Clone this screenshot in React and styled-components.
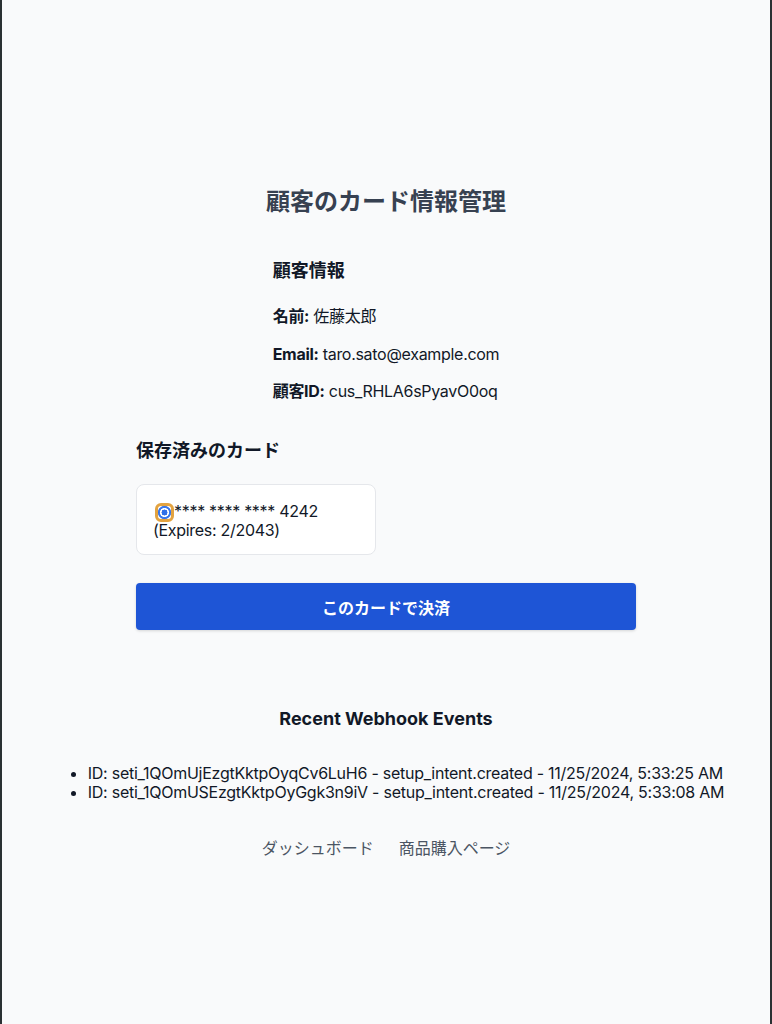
import React from "react";
import styled, { createGlobalStyle } from "styled-components";

const GlobalStyle = createGlobalStyle`
  html, body {
    margin: 0;
    padding: 0;
    background: #f9fafb;
  }
  body {
    font-family: Inter, "Noto Sans CJK JP", sans-serif;
    color: #111827;
  }
`;

const Frame = styled.div`
  min-height: 100vh;
  box-sizing: border-box;
  border-left: 2px solid #2a3133;
  border-right: 2px solid #2a3133;
  background: #f9fafb;
  display: flex;
  flex-direction: column;
  align-items: center;
  padding-top: 187px;
`;

const Title = styled.h1`
  margin: 0;
  font-size: 24px;
  line-height: 30px;
  font-weight: 700;
  color: #374151;
`;

const InfoBlock = styled.section`
  margin-top: 42px;
  width: fit-content;
  text-align: left;
`;

const SectionTitle = styled.h2`
  margin: 0;
  font-size: 18px;
  line-height: 24px;
  font-weight: 700;
  color: #111827;
`;

const InfoList = styled.div`
  margin-top: 22px;
  display: flex;
  flex-direction: column;
  gap: 15.5px;
`;

const InfoRow = styled.p`
  margin: 0;
  font-size: 16px;
  line-height: 22px;
  letter-spacing: -0.3px;
  b {
    font-weight: 700;
  }
`;

const CardsSection = styled.section`
  margin-top: 37px;
  width: 500px;
`;

const CardGrid = styled.div`
  margin-top: 21px;
  display: grid;
  grid-template-columns: 1fr 1fr;
  gap: 20px;
`;

const CardOption = styled.label`
  display: block;
  background: #ffffff;
  border: 1px solid #e5e7eb;
  border-radius: 8px;
  padding: 17px 16px 14px;
  font-size: 16px;
  line-height: 19px;
  letter-spacing: -0.3px;
  color: #111827;
  cursor: pointer;
`;

const RadioRing = styled.span`
  display: inline-flex;
  align-items: center;
  justify-content: center;
  box-sizing: border-box;
  width: 19px;
  height: 19px;
  margin: -4px 0 -4px 2px;
  vertical-align: -2px;
  border: 3px solid #e3a340;
  border-radius: 6px;
`;

const Radio = styled.input`
  appearance: none;
  margin: 0;
  width: 13px;
  height: 13px;
  border-radius: 50%;
  background: radial-gradient(circle, #2f6fe8 0 2.8px, #ffffff 3.2px 4.3px, #3b7bf0 4.7px);
  box-shadow: inset 0 0 0 0.5px #2a63d8;
  outline: none;
`;

const PayButton = styled.button`
  margin-top: 28px;
  width: 100%;
  height: 47px;
  border: none;
  border-radius: 4px;
  background: #1e55d6;
  color: #ffffff;
  font-family: inherit;
  font-size: 16px;
  font-weight: 700;
  box-shadow: 0 1px 3px rgba(0, 0, 0, 0.15);
  cursor: pointer;
`;

const EventsSection = styled.section`
  margin-top: 77px;
  display: flex;
  flex-direction: column;
  align-items: center;
`;

const EventsTitle = styled.h3`
  margin: 0;
  font-size: 18px;
  line-height: 24px;
  font-weight: 700;
`;

const EventList = styled.ul`
  margin: 33px 0 0;
  padding-left: 40px;
  width: fit-content;
  font-size: 16px;
  line-height: 19px;
  letter-spacing: -0.25px;
`;

const Nav = styled.nav`
  margin-top: 36px;
  display: flex;
  gap: 25px;
`;

const NavLink = styled.a`
  font-size: 16px;
  line-height: 20px;
  color: #4b5563;
  text-decoration: none;
`;

const events = [
  "ID: seti_1QOmUjEzgtKktpOyqCv6LuH6 - setup_intent.created - 11/25/2024, 5:33:25 AM",
  "ID: seti_1QOmUSEzgtKktpOyGgk3n9iV - setup_intent.created - 11/25/2024, 5:33:08 AM",
];

export default function App() {
  return (
    <>
      <GlobalStyle />
      <Frame>
        <Title>顧客のカード情報管理</Title>

        <InfoBlock>
          <SectionTitle>顧客情報</SectionTitle>
          <InfoList>
            <InfoRow><b>名前:</b> 佐藤太郎</InfoRow>
            <InfoRow><b>Email:</b> taro.sato@example.com</InfoRow>
            <InfoRow><b>顧客ID:</b> cus_RHLA6sPyavO0oq</InfoRow>
          </InfoList>
        </InfoBlock>

        <CardsSection>
          <SectionTitle>保存済みのカード</SectionTitle>
          <CardGrid>
            <CardOption>
              <RadioRing>
                <Radio type="radio" name="card" defaultChecked />
              </RadioRing>
              **** **** **** 4242 (Expires: 2/2043)
            </CardOption>
          </CardGrid>
          <PayButton>このカードで決済</PayButton>
        </CardsSection>

        <EventsSection>
          <EventsTitle>Recent Webhook Events</EventsTitle>
          <EventList>
            {events.map((e) => (
              <li key={e}>{e}</li>
            ))}
          </EventList>
        </EventsSection>

        <Nav>
          <NavLink href="#">ダッシュボード</NavLink>
          <NavLink href="#">商品購入ページ</NavLink>
        </Nav>
      </Frame>
    </>
  );
}
